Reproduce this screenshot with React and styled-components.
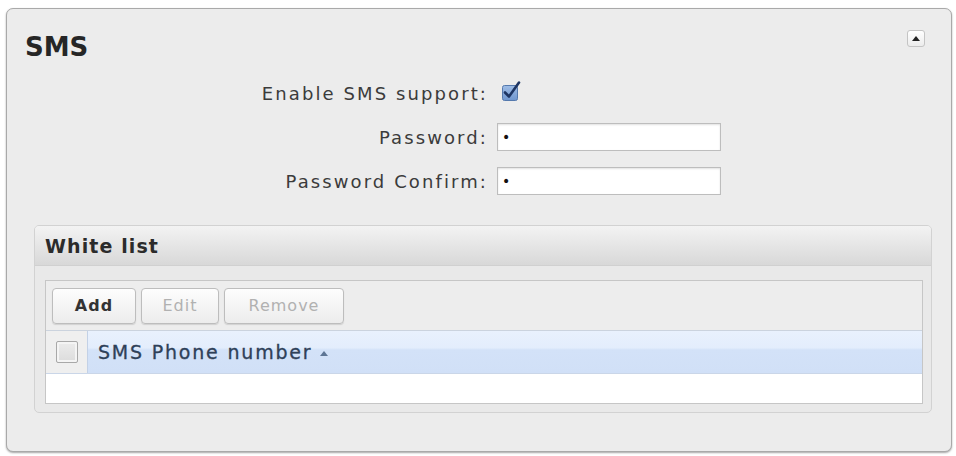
import React from "react";
import styled, { createGlobalStyle } from "styled-components";

const GlobalStyle = createGlobalStyle`
  html, body {
    margin: 0;
    padding: 0;
    background: #ffffff;
  }
  * {
    box-sizing: border-box;
  }
`;

const Page = styled.div`
  padding: 8px 4px 4px 6px;
  font-family: "DejaVu Sans", Verdana, sans-serif;
`;

const Panel = styled.section`
  height: 444px;
  border: 1px solid #a9a9a9;
  border-radius: 7px;
  background: #ececec;
  box-shadow: 0 1px 2px rgba(0, 0, 0, 0.35);
  padding: 0 19px 0 18px;
`;

const PanelHeader = styled.div`
  display: flex;
  justify-content: space-between;
  align-items: flex-start;
  padding: 23px 7px 0 0;
`;

const Title = styled.h2`
  margin: 0;
  font-size: 26px;
  line-height: 30px;
  font-weight: bold;
  color: #262626;
`;

const CollapseButton = styled.button`
  margin-top: -2px;
  width: 18px;
  height: 17px;
  padding: 0;
  border: 1px solid #c4c4c4;
  border-radius: 3px;
  background: linear-gradient(#ffffff, #ececec);
  display: flex;
  align-items: center;
  justify-content: center;

  &::after {
    content: "";
    width: 0;
    height: 0;
    border-left: 4px solid transparent;
    border-right: 4px solid transparent;
    border-bottom: 5px solid #222;
  }
`;

const Form = styled.div`
  display: grid;
  grid-template-columns: 463px 224px;
  grid-auto-rows: 28px;
  column-gap: 9px;
  row-gap: 16px;
  align-items: center;
  margin-top: 17px;
`;

const Label = styled.label`
  text-align: right;
  font-size: 18px;
  letter-spacing: 2.1px;
  color: #3b3b3b;
  white-space: nowrap;
`;

const TextInput = styled.input`
  height: 28px;
  width: 224px;
  border: 1px solid #bdbdbd;
  background: #fff;
  box-shadow: inset 0 1px 2px rgba(0, 0, 0, 0.12);
  padding: 0 4px;
  font-family: "DejaVu Sans", sans-serif;
  font-size: 14px;
  color: #111;
  outline: none;
`;

const CheckMark = () => (
  <svg width="22" height="22" viewBox="0 0 22 22">
    <defs>
      <linearGradient id="cbg" x1="0" y1="0" x2="0" y2="1">
        <stop offset="0" stopColor="#9fbde6" />
        <stop offset="1" stopColor="#6f96cf" />
      </linearGradient>
    </defs>
    <rect x="2.5" y="5.5" width="15" height="15" rx="2" fill="url(#cbg)" stroke="#5579ad" />
    <path d="M5 12.5 L9 16.5 L19 2.5" fill="none" stroke="#1d3563" strokeWidth="2.6" strokeLinecap="round" strokeLinejoin="round" />
  </svg>
);

const CheckWrap = styled.div`
  display: flex;
  align-items: center;
  height: 28px;
  margin-left: 3px;
  margin-top: -4px;
`;

const WhiteList = styled.div`
  margin: 30px 0 0 9px;
  height: 188px;
  border: 1px solid #d2d2d2;
  border-radius: 5px;
  background: #e9e9e9;
  overflow: hidden;
`;

const WhiteListHeader = styled.div`
  height: 40px;
  display: flex;
  align-items: center;
  padding: 0 10px;
  background: linear-gradient(#f3f3f3, #d8d8d8);
  border-bottom: 1px solid #d0d0d0;
  font-size: 19px;
  font-weight: bold;
  letter-spacing: 1.1px;
  color: #2b2b2b;
`;

const WhiteListBody = styled.div`
  padding: 14px 8px 9px 10px;
`;

const Grid = styled.div`
  border: 1px solid #c6c6c6;
  background: #ffffff;
`;

const Toolbar = styled.div`
  height: 49px;
  background: #ededed;
  display: flex;
  align-items: center;
  gap: 5px;
  padding: 0 6px;
`;

const ToolButton = styled.button`
  height: 36px;
  width: ${(props) => props.$w}px;
  border: 1px solid #bdbdbd;
  border-radius: 4px;
  background: linear-gradient(#fdfdfd, #ececec);
  box-shadow: 0 1px 1px rgba(0, 0, 0, 0.12);
  font-family: "DejaVu Sans", sans-serif;
  font-size: 16px;
  font-weight: ${(props) => (props.disabled ? "normal" : "bold")};
  letter-spacing: 1px;
  color: ${(props) => (props.disabled ? "#b1b1b1" : "#333")};
  padding: 0;
`;

const HeaderRow = styled.div`
  height: 44px;
  display: flex;
  background: linear-gradient(#e9f1fd 0%, #e3edfc 40%, #d3e2f8 45%, #d1e0f7 100%);
  border-top: 1px solid #cbd3de;
  border-bottom: 1px solid #cad6e8;
`;

const SelectCell = styled.div`
  width: 42px;
  display: flex;
  align-items: center;
  justify-content: center;
  background: #efefef;
  border-right: 1px solid #c3d1e6;
`;

const RowBox = styled.span`
  width: 22px;
  height: 22px;
  border: 1px solid #a8a8a8;
  border-radius: 2px;
  background: linear-gradient(#ececec, #dcdcdc);
  box-shadow: inset 0 0 0 2px #f4f4f4;
`;

const ColumnLabel = styled.div`
  display: flex;
  align-items: center;
  gap: 8px;
  padding-left: 10px;
  font-size: 19px;
  font-weight: normal;
  letter-spacing: 1.8px;
  color: #2e4058;
  -webkit-text-stroke: 0.3px #2e4058;
`;

const SortArrow = styled.span`
  width: 0;
  height: 0;
  border-left: 4px solid transparent;
  border-right: 4px solid transparent;
  border-bottom: 5px solid #5d7594;
  margin-top: 2px;
`;

const EmptyRow = styled.div`
  height: 29px;
  background: #ffffff;
`;

const App = () => {
  return (
    <Page>
      <GlobalStyle />
      <Panel>
        <PanelHeader>
          <Title>SMS</Title>
          <CollapseButton aria-label="Collapse" />
        </PanelHeader>

        <Form>
          <Label>Enable SMS support:</Label>
          <CheckWrap>
            <CheckMark />
          </CheckWrap>

          <Label>Password:</Label>
          <TextInput type="text" value="•" readOnly />

          <Label>Password Confirm:</Label>
          <TextInput type="text" value="•" readOnly />
        </Form>

        <WhiteList>
          <WhiteListHeader>White list</WhiteListHeader>
          <WhiteListBody>
            <Grid>
              <Toolbar>
                <ToolButton $w={84}>Add</ToolButton>
                <ToolButton $w={78} disabled>
                  Edit
                </ToolButton>
                <ToolButton $w={120} disabled>
                  Remove
                </ToolButton>
              </Toolbar>
              <HeaderRow>
                <SelectCell>
                  <RowBox />
                </SelectCell>
                <ColumnLabel>
                  SMS Phone number
                  <SortArrow />
                </ColumnLabel>
              </HeaderRow>
              <EmptyRow />
            </Grid>
          </WhiteListBody>
        </WhiteList>
      </Panel>
    </Page>
  );
};

export default App;
